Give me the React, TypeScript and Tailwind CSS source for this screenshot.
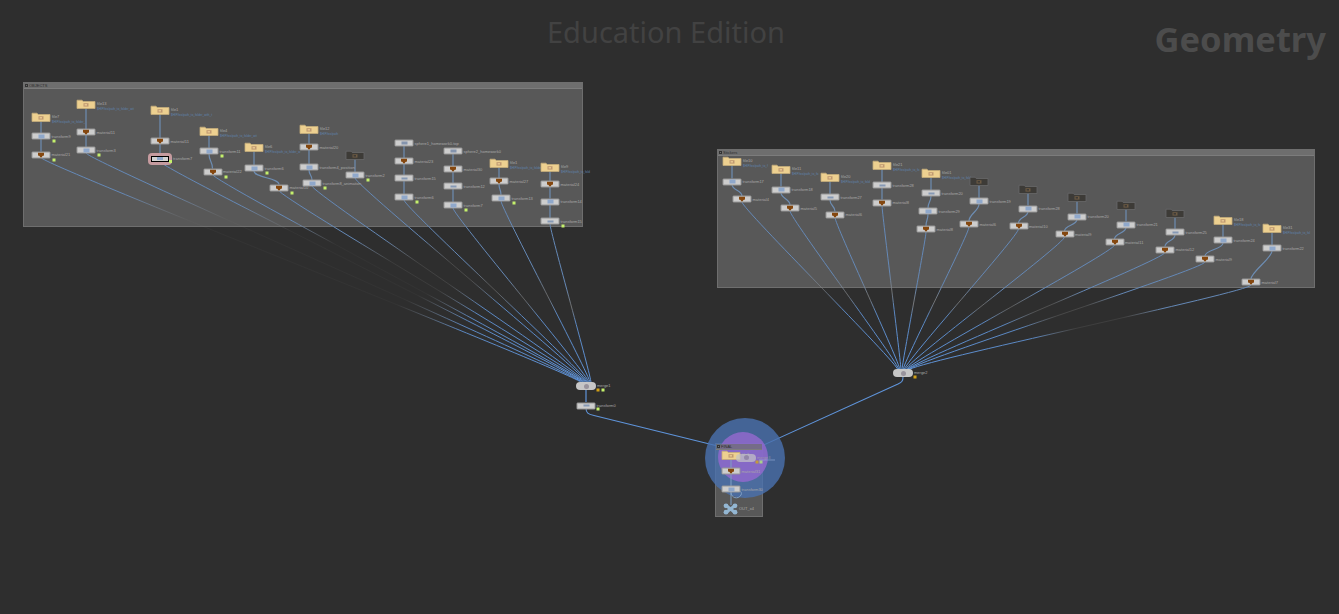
import React from "react";

type Kind = "folder" | "dark" | "xform" | "mat" | "thin" | "sel" | "sphere";
type N = { k: Kind; x: number; y: number; l: string; dot?: boolean; note?: number };

const cols: N[][] = [
  [{ k: "folder", x: 41, y: 117, l: "file7", note: 32 }, { k: "xform", x: 41, y: 136, l: "transform9", dot: true }, { k: "mat", x: 41, y: 154.5, l: "material21", dot: true }],
  [{ k: "folder", x: 86, y: 103.5, l: "file13", note: 36 }, { k: "mat", x: 86, y: 132, l: "material11" }, { k: "xform", x: 86, y: 150, l: "transform3", dot: true }],
  [{ k: "folder", x: 160, y: 110, l: "file1", note: 40 }, { k: "mat", x: 160, y: 141, l: "material11" }, { k: "sel", x: 160, y: 158.5, l: "transform7", dot: true }],
  [{ k: "folder", x: 209, y: 131, l: "file4", note: 36 }, { k: "xform", x: 209, y: 151, l: "transform11", dot: true }, { k: "mat", x: 212.5, y: 171.5, l: "material22", dot: true }],
  [{ k: "folder", x: 254, y: 147, l: "file6", note: 34 }, { k: "xform", x: 254, y: 168, l: "transform6", dot: true }, { k: "mat", x: 279, y: 187.5, l: "material10", dot: true }],
  [{ k: "folder", x: 309, y: 128.5, l: "file12", note: 18 }, { k: "mat", x: 309, y: 147, l: "material20" }, { k: "xform", x: 309, y: 167, l: "transform4_position" }, { k: "xform", x: 312, y: 183, l: "transform8_animation", dot: true }],
  [{ k: "dark", x: 355, y: 155, l: "" }, { k: "xform", x: 355, y: 175, l: "transform2", dot: true }],
  [{ k: "sphere", x: 404, y: 143, l: "sphere1_homework0-top" }, { k: "mat", x: 404, y: 161, l: "material23" }, { k: "thin", x: 404, y: 178, l: "transform15" }, { k: "xform", x: 404, y: 197, l: "transform6", dot: true }],
  [{ k: "sphere", x: 453, y: 151, l: "sphere2_homework0" }, { k: "mat", x: 453, y: 169, l: "material30" }, { k: "thin", x: 453, y: 186, l: "transform12" }, { k: "xform", x: 453, y: 205, l: "transform7", dot: true }],
  [{ k: "folder", x: 499, y: 163, l: "file1", note: 34 }, { k: "mat", x: 499, y: 181, l: "material27" }, { k: "xform", x: 501, y: 198, l: "transform13", dot: true }],
  [{ k: "folder", x: 550, y: 167, l: "file9", note: 28 }, { k: "mat", x: 550, y: 184, l: "material24" }, { k: "xform", x: 550, y: 201.5, l: "transform14" }, { k: "thin", x: 550, y: 221, l: "transform15", dot: true }],
];

const stick: N[][] = [
  [{ k: "folder", x: 732, y: 161, l: "file10", note: 24 }, { k: "xform", x: 732, y: 181.5, l: "transform17" }, { k: "mat", x: 742, y: 199, l: "material4" }],
  [{ k: "folder", x: 781, y: 169, l: "file11", note: 25 }, { k: "xform", x: 781, y: 189.5, l: "transform18" }, { k: "mat", x: 790, y: 208, l: "material5" }],
  [{ k: "folder", x: 830, y: 177, l: "file20", note: 29 }, { k: "thin", x: 830, y: 197, l: "transform27" }, { k: "mat", x: 835, y: 214.5, l: "material6" }],
  [{ k: "folder", x: 882, y: 165, l: "file21", note: 26 }, { k: "thin", x: 882, y: 185, l: "transform28" }, { k: "mat", x: 882, y: 202.5, l: "material8" }],
  [{ k: "folder", x: 931, y: 172.5, l: "file01", note: 31 }, { k: "thin", x: 931, y: 193, l: "transform20" }, { k: "xform", x: 928, y: 211, l: "transform29" }, { k: "mat", x: 926, y: 229, l: "material8" }],
  [{ k: "dark", x: 979, y: 181, l: "" }, { k: "xform", x: 979, y: 201, l: "transform19" }, { k: "mat", x: 969, y: 224, l: "material6" }],
  [{ k: "dark", x: 1028, y: 188.5, l: "" }, { k: "xform", x: 1028, y: 208.5, l: "transform28" }, { k: "mat", x: 1018.5, y: 226, l: "material10" }],
  [{ k: "dark", x: 1077, y: 197, l: "" }, { k: "xform", x: 1077, y: 216.5, l: "transform20" }, { k: "mat", x: 1064.5, y: 234, l: "material9" }],
  [{ k: "dark", x: 1126, y: 204.5, l: "" }, { k: "xform", x: 1126, y: 224.5, l: "transform21" }, { k: "mat", x: 1114.5, y: 242, l: "material11" }],
  [{ k: "dark", x: 1175, y: 212.5, l: "" }, { k: "thin", x: 1175, y: 232, l: "transform25" }, { k: "mat", x: 1165, y: 249.5, l: "material12" }],
  [{ k: "folder", x: 1223, y: 220, l: "file18", note: 26 }, { k: "xform", x: 1223, y: 240, l: "transform24" }, { k: "mat", x: 1205, y: 259, l: "material9" }],
  [{ k: "folder", x: 1272, y: 228, l: "file31", note: 27 }, { k: "xform", x: 1272, y: 248, l: "transform22" }, { k: "mat", x: 1251, y: 282, l: "material7" }],
];

const bottomNodes: N[] = [
  { k: "folder", x: 731, y: 455, l: "file3" },
  { k: "mat", x: 731, y: 471, l: "material31" },
  { k: "xform", x: 731, y: 489, l: "transform30" },
];

const noteText = "$HIP/tex/path_to_folder_with_the_image_sequence";

const curve = (x1: number, y1: number, x2: number, y2: number) => {
  const d = Math.min(Math.abs(y2 - y1) / 2, 7);
  return `M${x1} ${y1}C${x1} ${y1 + d} ${x2} ${y2 - d} ${x2} ${y2}`;
};

function LongWire({ id, a, b }: { id: string; a: [number, number]; b: [number, number] }) {
  const len = Math.hypot(b[0] - a[0], b[1] - a[1]);
  const mid = Math.max(0.06, Math.min(1, 1.25 - len / 330));
  const s = Math.min(0.4, 90 / len);
  const g1 = s + 0.12;
  const e = Math.max(0.62, 1 - 130 / len);
  const g2 = Math.max(g1, e - 0.12);
  const grey = mid < 1 ? "#868686" : "#5a86bf";
  return (
    <g>
      <defs>
        <linearGradient id={id} gradientUnits="userSpaceOnUse" x1={a[0]} y1={a[1]} x2={b[0]} y2={b[1]}>
          <stop offset="0" stopColor="#6488b6" />
          <stop offset={s} stopColor="#6488b6" />
          <stop offset={g1} stopColor={grey} stopOpacity={mid} />
          <stop offset={g2} stopColor={grey} stopOpacity={mid} />
          <stop offset={e} stopColor="#5a86bf" />
          <stop offset="1" stopColor="#5f94da" />
        </linearGradient>
      </defs>
      <path d={curve(a[0], a[1], b[0], b[1])} fill="none" stroke={`url(#${id})`} strokeWidth="1" />
    </g>
  );
}

function Folder({ dark }: { dark?: boolean }) {
  return (
    <svg width="20" height="10" viewBox="0 0 20 10" className="block">
      <path
        d="M1 1.2h5l1.2 1.3H19V9.5H1z"
        fill={dark ? "#3d3b37" : "#edd090"}
        stroke={dark ? "#68686a" : "#c4ac7a"}
        strokeWidth="0.8"
      />
      <rect x="7.5" y="4.2" width="5" height="3.4" fill={dark ? "#6c5a44" : "#c09a72"} />
      <rect x="8.6" y="5" width="2.4" height="1.6" fill={dark ? "#3d3b37" : "#e6c691"} />
    </svg>
  );
}

function Glyph({ k }: { k: Kind }) {
  if (k === "mat")
    return (
      <svg width="7" height="5" viewBox="0 0 7 5" className="block">
        <path d="M0.5 0h6v3L4.8 3.6 4.4 5H2.6L2.2 3.6 0.5 3z" fill="#84470f" />
      </svg>
    );
  if (k === "thin") return <span className="block w-[6px] h-[2px] bg-[#8699b5]" />;
  if (k === "sphere") return <span className="block w-[6px] h-[3px] bg-[#8494ad]" />;
  return <span className="block w-[6px] h-[4px] bg-[#8fa8cb]" />;
}

function Node({ n }: { n: N }) {
  const isFolder = n.k === "folder" || n.k === "dark";
  return (
    <div className="absolute" style={{ left: n.x, top: n.y, transform: "translate(-50%,-50%)" }}>
      <div className="relative">
        {isFolder ? (
          <Folder dark={n.k === "dark"} />
        ) : n.k === "sel" ? (
          <div className="w-[24px] h-[12px] bg-[#c69b9f] rounded-[4px] flex items-center justify-center">
            <div className="w-[18px] h-[6px] bg-[#d2d2d2] border border-black flex items-center justify-center">
              <span className="block w-[6px] h-[3px] bg-[#8fa8cb]" />
            </div>
          </div>
        ) : (
          <div className="w-[19px] h-[7px] bg-[#cdcdcd] border-[0.5px] border-[#969696] rounded-[1px] flex items-center justify-center">
            <Glyph k={n.k} />
          </div>
        )}
        {n.l && (
          <span className="absolute left-full top-1/2 -translate-y-1/2 ml-[1px] text-[4px] leading-none whitespace-nowrap text-[#a8a8a8] font-['Liberation_Sans',sans-serif]">
            {n.l}
          </span>
        )}
        {n.note && (
          <span className="absolute left-full top-[9px] ml-[1px] text-[3px] leading-[3px] whitespace-nowrap text-[#5f83ad] font-['Liberation_Sans',sans-serif]">
            {noteText.slice(0, Math.round(n.note / 1.35))}
          </span>
        )}
        {n.dot && <span className="absolute left-[21px] top-[7px] w-[3px] h-[3px] bg-[#c4f06c]" />}
      </div>
    </div>
  );
}

function Merge({ x, y, label, faded }: { x: number; y: number; label: string; faded?: boolean }) {
  return (
    <div className={`absolute ${faded ? "opacity-70" : ""}`} style={{ left: x, top: y, transform: "translate(-50%,-50%)" }}>
      <div className="relative w-[20px] h-[8px] rounded-full bg-[#c6c6c6] flex items-center justify-center">
        <span className="block w-[5px] h-[5px] rounded-full bg-[#98939c]" />
        <span className="absolute left-full top-1/2 -translate-y-1/2 ml-[1px] text-[4px] leading-none whitespace-nowrap text-[#a8a8a8] font-['Liberation_Sans',sans-serif]">
          {label}
        </span>
      </div>
    </div>
  );
}

function NetBox({ title, className, barClass = "" }: { title: string; className: string; barClass?: string }) {
  return (
    <div className={`absolute bg-[#585858] border border-[#6e6e6e] ${className}`}>
      <div className={`h-[6px] bg-[#6e6e6e] border-b border-[#7c7c7c] flex items-center gap-[1px] pl-[1px] ${barClass}`}>
        <span className="block w-[3px] h-[3px] border-[0.5px] border-[#333]" />
        <span className="text-[4px] leading-none text-[#2c2c2c] font-['Liberation_Sans',sans-serif]">{title}</span>
      </div>
    </div>
  );
}

export default function App() {
  const all = [...cols, ...stick];
  const tails = (g: N[][]) => g.map((c) => c[c.length - 1]);
  return (
    <div className="relative w-[1339px] h-[614px] overflow-hidden bg-[#2e2e2e]">
      <div className="absolute left-[547px] top-[13px] text-[29px] leading-[38px] text-[#424242] font-['Noto_Sans',sans-serif]">
        Education Edition
      </div>
      <div className="absolute right-[13px] top-[16px] text-[34.5px] leading-[46px] font-bold text-[#4c4c4c] font-['Noto_Sans',sans-serif]">
        Geometry
      </div>

      <NetBox title="OBJECTS" className="left-[23px] top-[82px] w-[560px] h-[145px]" />
      <NetBox title="Stickers" className="left-[717px] top-[149px] w-[598px] h-[139px]" />
      <NetBox title="FINAL" className="left-[715px] top-[443px] w-[48px] h-[74px]" barClass="relative z-10 bg-[#6e6e6e]/70" />

      <svg width="1339" height="614" className="absolute left-0 top-0 pointer-events-none">
        {all.map((c, ci) =>
          c.slice(0, -1).map((n, i) => (
            <path
              key={`${ci}-${i}`}
              d={curve(n.x, n.y + 3, c[i + 1].x, c[i + 1].y - 3)}
              fill="none"
              stroke="#6d8db3"
              strokeWidth="1.2"
            />
          )),
        )}
        {tails(cols).map((n, i) => (
          <LongWire key={i} id={`a${i}`} a={[n.x, n.y + 3]} b={[581 + i, 382.5]} />
        ))}
        {tails(stick).map((n, i) => (
          <LongWire key={i} id={`b${i}`} a={[n.x, n.y + 3]} b={[898 + i, 370]} />
        ))}
        <path d={curve(586, 389, 586, 402)} fill="none" stroke="#5f94da" strokeWidth="1.2" />
        <path d="M586 408C586 413 588 414 594 415.5L746 453" fill="none" stroke="#5f94da" strokeWidth="1.1" />
        <path d="M903 377C903 381 902 382 898 384L746 453" fill="none" stroke="#5f94da" strokeWidth="1.1" />
      </svg>

      <div className="absolute left-[705px] top-[418px] w-[80px] h-[80px] rounded-full bg-[#4a72b0]/80" />
      <div className="absolute left-[718px] top-[432px] w-[50px] h-[50px] rounded-full bg-[#9069cc]/85" />

      <svg width="1339" height="614" className="absolute left-0 top-0 pointer-events-none">
        <path d="M731 458V486M731 492V505" fill="none" stroke="#7fa0c4" />
        <path d="M731 492C731 498 738 500 741 495C743 491 738 491 735 489" fill="none" stroke="#7fa0c4" />
        <path d="M759 460H775" fill="none" stroke="#9ab0dc" strokeOpacity="0.6" />
        {[
          [598, 390, "#d2a017"],
          [603, 390, "#c4f06c"],
          [598, 409, "#c4f06c"],
          [915, 377, "#d2a017"],
          [757, 462, "#c39a3a"],
          [761, 462, "#a8d08a"],
        ].map(([x, y, c]) => (
          <rect key={`${x}-${y}`} x={(x as number) - 1.5} y={(y as number) - 1.5} width="3" height="3" fill={c as string} />
        ))}
      </svg>

      {all.flat().map((n, i) => (
        <Node key={i} n={n} />
      ))}
      <Merge x={586} y={386} label="merge1" />
      <Node n={{ k: "thin", x: 586, y: 405.5, l: "transform0" }} />
      <Merge x={903} y={373} label="merge2" />
      {bottomNodes.map((n, i) => (
        <Node key={i} n={n} />
      ))}
      <Merge x={746} y={457.5} label="merge3" faded />
      <div className="absolute left-[723px] top-[503px] flex items-center gap-[1px]">
        <svg width="15" height="12" viewBox="0 0 15 12" className="block">
          <path d="M3 2.5L12 9.5M12 2.5L3 9.5" stroke="#93b6d2" strokeWidth="3" />
          <circle cx="3" cy="2.8" r="2.4" fill="#93b6d2" />
          <circle cx="12" cy="2.8" r="2.4" fill="#93b6d2" />
          <circle cx="3" cy="9.2" r="2.4" fill="#93b6d2" />
          <circle cx="12" cy="9.2" r="2.4" fill="#93b6d2" />
        </svg>
        <span className="text-[4px] leading-none text-[#a8a8a8] font-['Liberation_Sans',sans-serif]">OUT_x4</span>
      </div>
    </div>
  );
}
